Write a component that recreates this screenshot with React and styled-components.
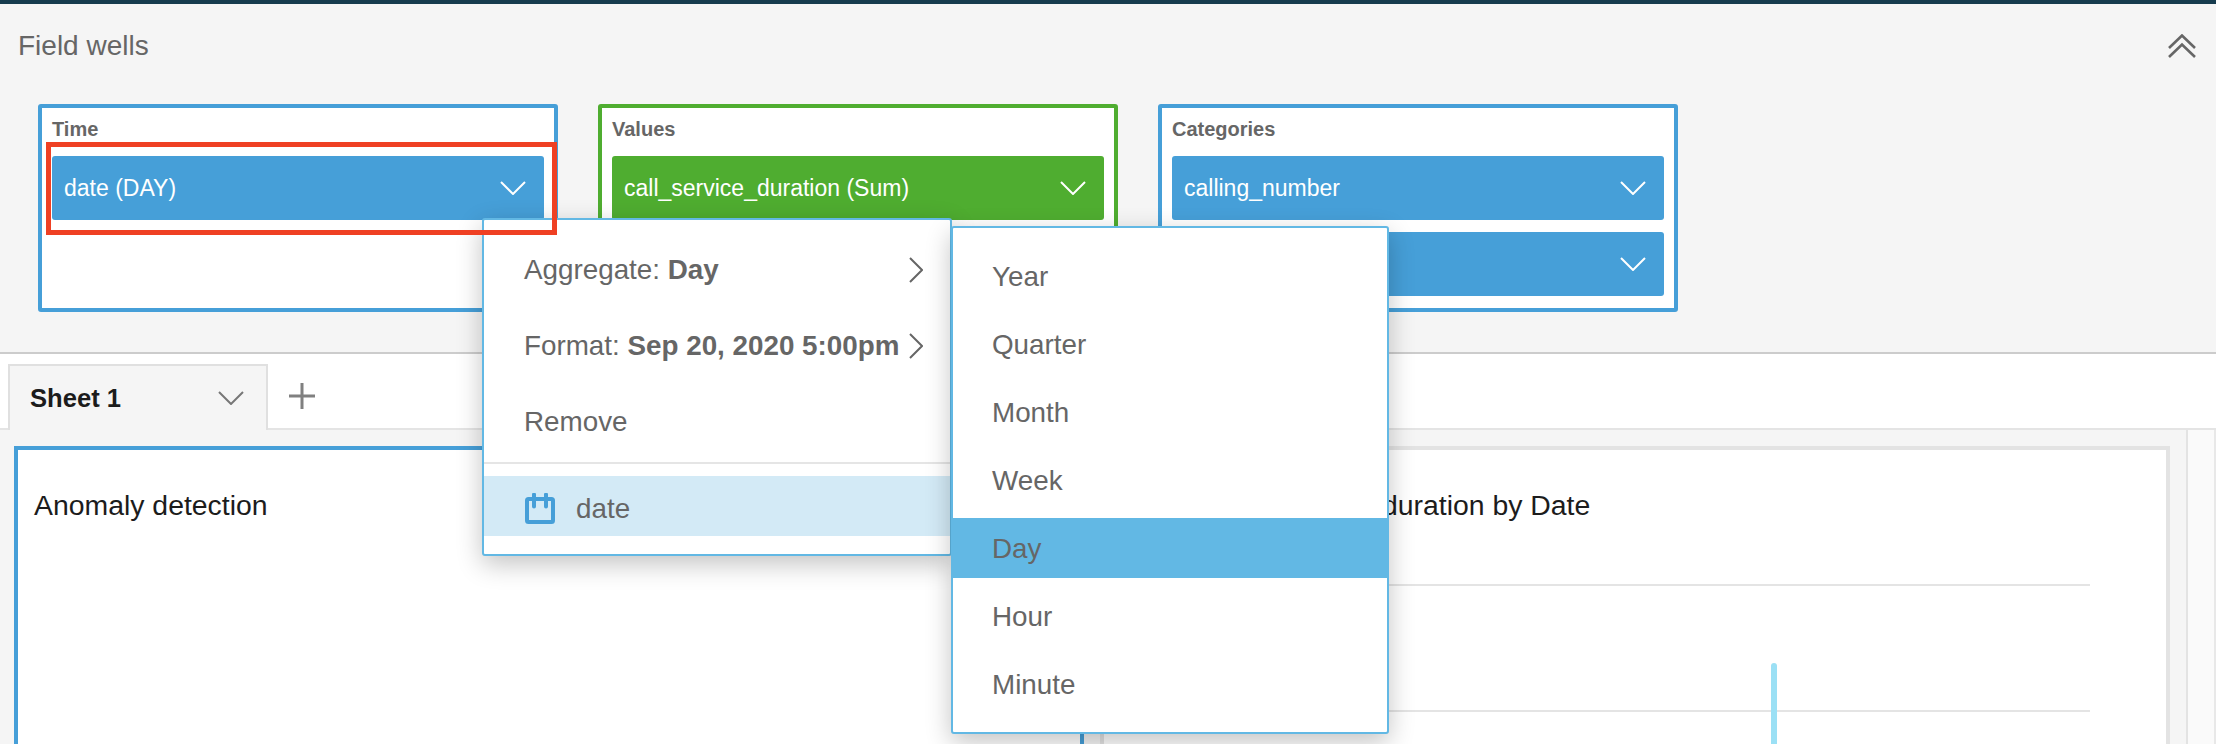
import React from 'react';
import styled, {createGlobalStyle} from 'styled-components'

const blue = '#469fd8';
const green = '#4fad30';
const menuBlue = '#62b8e4';
const textGrey = '#666';

const GlobalStyle = createGlobalStyle`
    html, body {
        margin: 0;
        padding: 0;
        background: #fff;
        font-family: "Liberation Sans", Arial, sans-serif;
    }
    * {
        box-sizing: border-box;
    }
`;

const Page = styled.div`
    position: relative;
    width: 2216px;
    height: 744px;
    overflow: hidden;
    display: flex;
    flex-direction: column;
    border-top: 4px solid #163c4e;
`;

// field wells panel
const WellsPanel = styled.section`
    height: 350px;
    flex: none;
    background: #f5f5f5;
    border-bottom: 2px solid #ccc;
`;
const WellsHeader = styled.header`
    height: 82px;
    padding: 2px 20px 0 18px;
    display: flex;
    align-items: center;
    justify-content: space-between;
`;
const PanelTitle = styled.h2`
    margin: 0;
    font-size: 28px;
    font-weight: normal;
    color: ${textGrey};
`;
const WellRow = styled.div`
    display: flex;
    gap: 40px;
    padding: 18px 0 0 38px;
`;
const Well = styled.div`
    width: 520px;
    height: 208px;
    background: #fff;
    border: 4px solid ${p => p.$color};
    border-radius: 3px;
    padding: 0 10px;
    display: flex;
    flex-direction: column;
    gap: 12px;
`;
const WellLabel = styled.div`
    height: 42px;
    margin-bottom: -6px;
    line-height: 42px;
    font-size: 20px;
    font-weight: bold;
    color: ${textGrey};
`;
const Pill = styled.div`
    height: 64px;
    flex: none;
    padding: 0 18px 0 12px;
    background: ${p => p.$color};
    border-radius: 3px;
    display: flex;
    align-items: center;
    justify-content: space-between;
    font-size: 23px;
    color: #fff;
`;

// tabs
const TabStrip = styled.div`
    height: 76px;
    flex: none;
    padding: 10px 0 0 8px;
    display: flex;
    align-items: stretch;
    background: #fff;
    border-bottom: 2px solid #e4e4e4;
`;
const Tab = styled.div`
    width: 260px;
    margin-bottom: -2px;
    padding: 0 22px 0 20px;
    background: #f5f5f5;
    border: 2px solid #e0e0e0;
    border-bottom: none;
    display: flex;
    align-items: center;
    justify-content: space-between;
    font-size: 25.6px;
    font-weight: bold;
    color: #1c1c1c;
`;
const AddTab = styled.div`
    margin-left: 21px;
    display: flex;
    align-items: center;
`;

// sheet
const Sheet = styled.div`
    flex: 1;
    display: flex;
    background: #f5f5f5;
    min-height: 0;
`;
const Canvas = styled.div`
    flex: 1;
    padding: 16px 16px 0 14px;
    display: flex;
    gap: 16px;
`;
const Visual = styled.div`
    flex: 1;
    height: 420px;
    background: #fff;
    border: 4px solid ${p => p.$selected ? blue : '#e3e3e3'};
`;
const VisualTitle = styled.h3`
    margin: 0;
    padding: 40px 0 0 16px;
    font-size: 28.4px;
    line-height: 30px;
    font-weight: normal;
    color: #1c1c1c;
`;
const ChartSvg = styled.svg`
    display: block;
    width: 100%;
    height: 300px;
`;
const ScrollTrack = styled.div`
    width: 30px;
    flex: none;
    background: #fafafa;
    border-left: 2px solid #e3e3e3;
    border-right: 2px solid #e8e8e8;
`;

// popup menus
const Menu = styled.div`
    position: absolute;
    top: ${p => p.$top}px;
    left: ${p => p.$left}px;
    width: ${p => p.$width}px;
    z-index: ${p => p.$layer};
    padding: ${p => p.$pad};
    background: #fff;
    border: 2px solid ${menuBlue};
    border-radius: 3px;
    box-shadow: 0 8px 26px rgba(0, 0, 0, .24);
    color: ${textGrey};
    font-size: 27.8px;
`;
const MenuItem = styled.div`
    height: 76px;
    padding: 0 27px 0 40px;
    display: flex;
    align-items: center;
    justify-content: space-between;
    b {
        font-weight: bold;
    }
`;
const Divider = styled.div`
    height: 2px;
    margin: 2px 0 12px;
    background: #e5e5e5;
`;
const FieldRow = styled.div`
    height: 60px;
    padding: 5px 0 0 41px;
    display: flex;
    align-items: center;
    gap: 21px;
    background: #d3eaf6;
`;
const OptionList = styled.div`
    display: flex;
    flex-direction: column;
    gap: 8px;
`;
const Option = styled.div`
    height: 60px;
    margin: 0 -2px;
    padding: 2px 0 0 41px;
    display: flex;
    align-items: center;
    background: ${p => p.$active ? menuBlue : 'transparent'};
`;

// red callout drawn on top of the screenshot
const Callout = styled.div`
    position: absolute;
    top: 138px;
    left: 46px;
    width: 511px;
    height: 93px;
    z-index: 5;
    border: 5px solid #ef4023;
    pointer-events: none;
`;

const ChevronDown = ({color = '#fff', width = 26, height = 14}) => (
    <svg width={width} height={height} viewBox="0 0 26 14" fill="none" preserveAspectRatio="none">
        <path d="M1 1 L13 13 L25 1" stroke={color} strokeWidth="2" />
    </svg>
);

const ChevronRight = () => (
    <svg width="14" height="26" viewBox="0 0 14 26" fill="none">
        <path d="M1 1 L13 13 L1 25" stroke="#666" strokeWidth="2" />
    </svg>
);

const CollapseIcon = () => (
    <svg width="28" height="24" viewBox="0 0 28 24" fill="none">
        <path d="M1 14 L14 1.5 L27 14" stroke="#666" strokeWidth="2.6" />
        <path d="M1 23 L14 10.5 L27 23" stroke="#666" strokeWidth="2.6" />
    </svg>
);

const PlusIcon = () => (
    <svg width="26" height="26" viewBox="0 0 26 26" fill="none">
        <path d="M13 0 V26 M0 13 H26" stroke="#808080" strokeWidth="3" />
    </svg>
);

const CalendarIcon = () => (
    <svg width="30" height="31" viewBox="0 0 30 31" fill="none">
        <rect x="2" y="6" width="26" height="23" rx="1.5" stroke={blue} strokeWidth="4" />
        <path d="M9 1.5 V13.5 M21 1.5 V13.5" stroke={blue} strokeWidth="4" strokeLinecap="round" />
    </svg>
);

const wells = [
    {label: 'Time', color: blue, fields: ['date (DAY)']},
    {label: 'Values', color: green, fields: ['call_service_duration (Sum)']},
    {label: 'Categories', color: blue, fields: ['calling_number', 'calling_name']},
];

const granularity = ['Year', 'Quarter', 'Month', 'Week', 'Day', 'Hour', 'Minute'];

const App = () => (
    <Page>
        <GlobalStyle />
        <WellsPanel>
            <WellsHeader>
                <PanelTitle>Field wells</PanelTitle>
                <CollapseIcon />
            </WellsHeader>
            <WellRow>
                {wells.map(well => (
                    <Well key={well.label} $color={well.color}>
                        <WellLabel>{well.label}</WellLabel>
                        {well.fields.map(field => (
                            <Pill key={field} $color={well.color}>
                                <span>{field}</span>
                                <ChevronDown />
                            </Pill>
                        ))}
                    </Well>
                ))}
            </WellRow>
        </WellsPanel>
        <TabStrip>
            <Tab>
                <span>Sheet 1</span>
                <ChevronDown color="#777" />
            </Tab>
            <AddTab><PlusIcon /></AddTab>
        </TabStrip>
        <Sheet>
            <Canvas>
                <Visual $selected>
                    <VisualTitle>Anomaly detection</VisualTitle>
                </Visual>
                <Visual>
                    <VisualTitle>Sum of call_service_duration by Date</VisualTitle>
                    <ChartSvg viewBox="0 0 1062 300" preserveAspectRatio="none">
                        <path d="M30 65 H986 M30 191 H986" stroke="#e4e4e4" strokeWidth="2" />
                        <path d="M670 146 V300" stroke="#9be0f5" strokeWidth="6" strokeLinecap="round" />
                    </ChartSvg>
                </Visual>
            </Canvas>
            <ScrollTrack />
        </Sheet>
        <Menu $top={214} $left={482} $width={470} $layer={2} $pad="12px 0 18px">
            <MenuItem>
                <span>Aggregate: <b>Day</b></span>
                <ChevronRight />
            </MenuItem>
            <MenuItem>
                <span>Format: <b>Sep 20, 2020 5:00pm</b></span>
                <ChevronRight />
            </MenuItem>
            <MenuItem>Remove</MenuItem>
            <Divider />
            <FieldRow>
                <CalendarIcon />
                <span>date</span>
            </FieldRow>
        </Menu>
        <Menu $top={222} $left={951} $width={438} $layer={3} $pad="18px 0 18px">
            <OptionList>
                {granularity.map(name => (
                    <Option key={name} $active={name === 'Day'}>{name}</Option>
                ))}
            </OptionList>
        </Menu>
        <Callout />
    </Page>
)

export default App
